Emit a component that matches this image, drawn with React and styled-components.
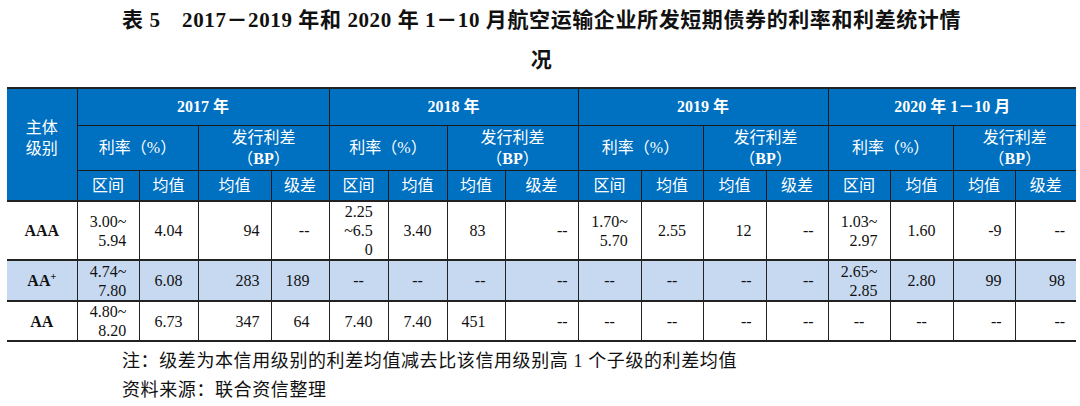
import React from 'react';
import styled, { createGlobalStyle } from 'styled-components';

const GlobalStyle = createGlobalStyle`
  html, body {
    margin: 0;
    padding: 0;
    background: #ffffff;
  }
  body {
    font-family: "Liberation Serif", "Noto Sans CJK SC", serif;
    color: #111;
  }
`;

const Page = styled.div`
  width: 1080px;
  height: 406px;
  overflow: hidden;
  padding: 0 0 0 7px;
  box-sizing: border-box;
`;

const Title = styled.h1`
  margin: 0;
  width: 1069px;
  height: 80px;
  font-size: 21px;
  line-height: 40px;
  font-weight: bold;
  text-align: center;
  color: #111;
  letter-spacing: 0.6px;
`;

const Table = styled.table`
  margin-top: 7px;
  width: 1069px;
  table-layout: fixed;
  border-collapse: collapse;
  border-top: 2px solid #222;
  border-bottom: 2px solid #222;
`;

const Col = styled.col`
  width: ${p => p.$w}px;
`;

const HeadRow = styled.tr`
  height: ${p => p.$h}px;
`;

const Th = styled.th`
  background: #0070c0;
  color: #ffffff;
  font-size: 16px;
  font-weight: ${p => (p.$bold ? 'bold' : 'normal')};
  line-height: 21px;
  text-align: center;
  vertical-align: middle;
  padding: 0 0 ${p => p.$pb || 0}px 0;
  border: 1px solid #1a1a1a;
  border-top: none;
  &:first-child {
    border-left: none;
  }
  &:last-child {
    border-right: none;
  }
`;

const SubHead = styled.tr`
  height: ${p => p.$h}px;
  & > th {
    border-bottom: 2px solid #222;
  }
  & > th:first-child {
    border-left: 1px solid #1a1a1a;
  }
`;

const BodyRow = styled.tr`
  height: ${p => p.$h}px;
  background: ${p => (p.$shaded ? '#c6d9f1' : '#ffffff')};
`;

const Td = styled.td`
  font-size: 16px;
  line-height: 19px;
  padding: 0 ${p => p.$pr || 0}px 0 0;
  text-align: ${p => p.$align || 'center'};
  vertical-align: middle;
  border: 1px solid #222;
  border-top: 2px solid #222;
  border-bottom: 2px solid #222;
  color: #111;
  &:first-child {
    border-left: none;
  }
  &:last-child {
    border-right: none;
  }
`;

const Grade = styled(Td)`
  font-weight: bold;
`;

const Plus = styled.sup`
  font-size: 10px;
  line-height: 0;
  vertical-align: 6px;
`;

const Range = styled.span`
  display: inline-block;
  text-align: right;
`;

const Notes = styled.div`
  margin-top: 5px;
  padding-left: 115px;
  font-size: 18px;
  line-height: 29px;
  letter-spacing: 0.6px;
  color: #111;
`;

const widths = [70, 62, 59, 73, 58, 59, 59, 58, 73, 63, 62, 63, 62, 62, 63, 62, 61];

const years = ['2017 年', '2018 年', '2019 年', '2020 年 1－10 月'];

// right padding of the two BP columns, per year
const bpPad = [
  [11, 19],
  [19, 10],
  [14, 14],
  [13, 11],
];

const rows = [
  {
    grade: 'AAA',
    h: 57,
    cells: [
      ['3.00~', '5.94'], '4.04', '94', '--',
      ['2.25', '~6.5', '0'], '3.40', '83', '--',
      ['1.70~', '5.70'], '2.55', '12', '--',
      ['1.03~', '2.97'], '1.60', '-9', '--',
    ],
  },
  {
    grade: 'AA',
    plus: true,
    shaded: true,
    h: 41,
    cells: [
      ['4.74~', '7.80'], '6.08', '283', '189',
      '--', '--', '--', '--',
      '--', '--', '--', '--',
      ['2.65~', '2.85'], '2.80', '99', '98',
    ],
  },
  {
    grade: 'AA',
    h: 39,
    cells: [
      ['4.80~', '8.20'], '6.73', '347', '64',
      '7.40', '7.40', '451', '--',
      '--', '--', '--', '--',
      '--', '--', '--', '--',
    ],
  },
];

const renderCell = (value, i) => {
  const year = Math.floor(i / 4);
  const kind = i % 4;
  if (kind === 2 || kind === 3) {
    return (
      <Td key={i} $align="right" $pr={bpPad[year][kind - 2]}>
        {value}
      </Td>
    );
  }
  if (Array.isArray(value)) {
    return (
      <Td key={i}>
        <Range>
          {value.map((line, j) => (
            <div key={j}>{line}</div>
          ))}
        </Range>
      </Td>
    );
  }
  return <Td key={i}>{value}</Td>;
};

const App = () => {
  return (
    <Page>
      <GlobalStyle />
      <Title>
        表 5　2017－2019 年和 2020 年 1－10 月航空运输企业所发短期债券的利率和利差统计情
        <br />
        况
      </Title>

      <Table>
        <colgroup>
          {widths.map((w, i) => (
            <Col key={i} $w={w} />
          ))}
        </colgroup>
        <thead>
          <HeadRow $h={37}>
            <Th rowSpan={3} $pb={14}>
              主体
              <br />
              级别
            </Th>
            {years.map(y => (
              <Th key={y} colSpan={4} $bold>
                {y}
              </Th>
            ))}
          </HeadRow>
          <HeadRow $h={45}>
            {years.map(y => (
              <React.Fragment key={y}>
                <Th colSpan={2}>利率（%）</Th>
                <Th colSpan={2}>
                  发行利差
                  <br />（<b>BP</b>）
                </Th>
              </React.Fragment>
            ))}
          </HeadRow>
          <SubHead $h={31}>
            {years.map(y => (
              <React.Fragment key={y}>
                <Th>区间</Th>
                <Th>均值</Th>
                <Th>均值</Th>
                <Th>级差</Th>
              </React.Fragment>
            ))}
          </SubHead>
        </thead>
        <tbody>
          {rows.map((row, r) => (
            <BodyRow key={r} $h={row.h} $shaded={row.shaded}>
              <Grade>
                {row.grade}
                {row.plus && <Plus>+</Plus>}
              </Grade>
              {row.cells.map(renderCell)}
            </BodyRow>
          ))}
        </tbody>
      </Table>

      <Notes>
        <div>注：级差为本信用级别的利差均值减去比该信用级别高 1 个子级的利差均值</div>
        <div>资料来源：联合资信整理</div>
      </Notes>
    </Page>
  );
};

export default App;
